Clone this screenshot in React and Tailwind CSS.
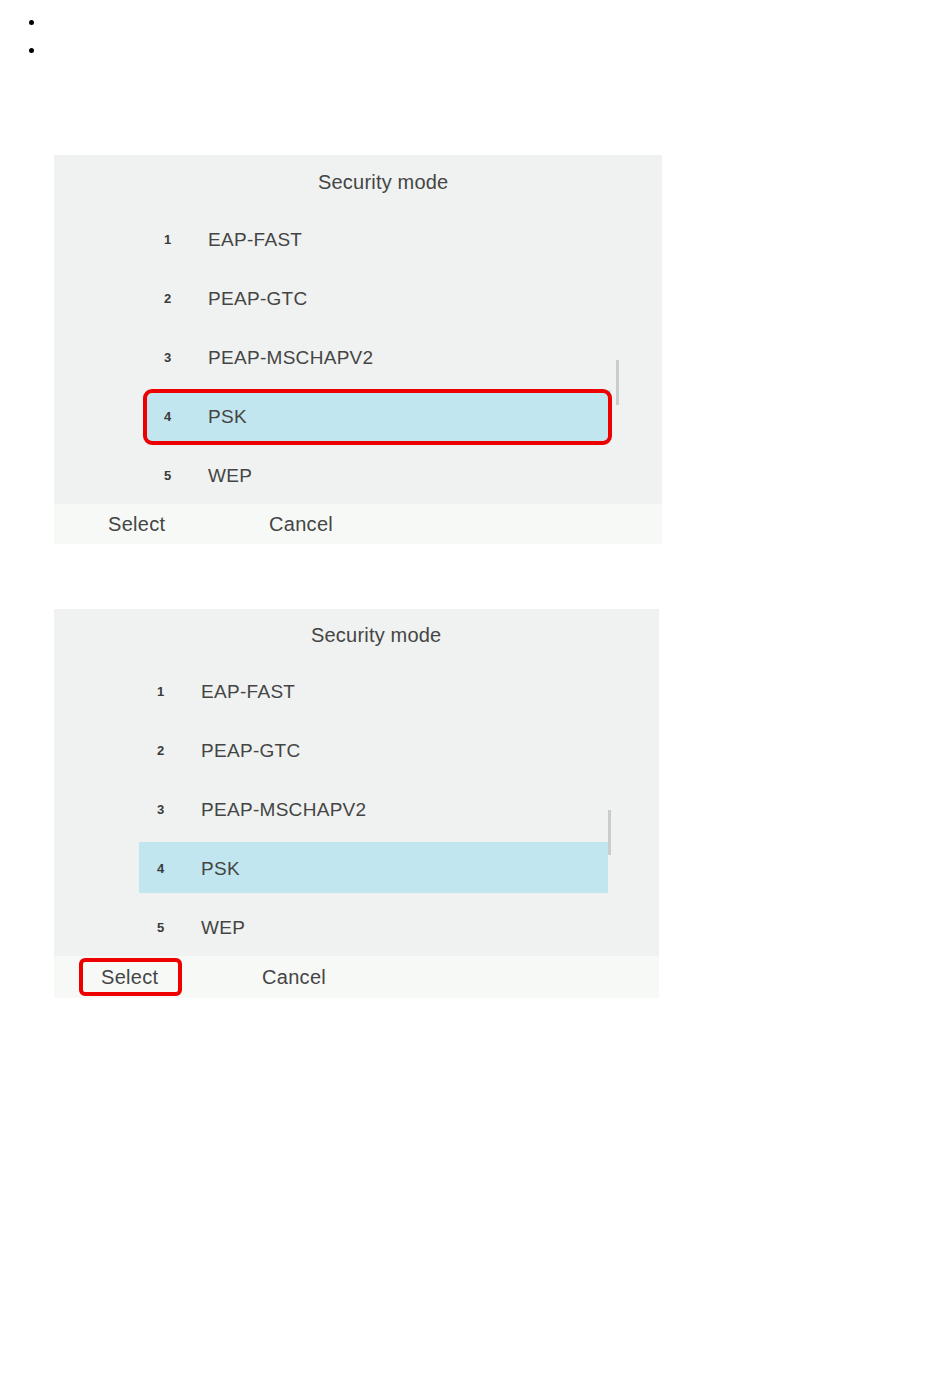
const items = ['EAP-FAST', 'PEAP-GTC', 'PEAP-MSCHAPV2', 'PSK', 'WEP'];

function Panel({ width, titleLeft, headerH, rowLeft, rowW, barLeft, barTop, softLeft, footerH, boxRow, boxSelect }) {
    return (
        <div className="relative bg-[#eff2f0] text-[#454545]" style={{ width }}>
            <div className="flex items-center text-[20px] tracking-[0.2px]" style={{ height: headerH, paddingLeft: titleLeft }}>
                Security mode
            </div>

            {/* list rows */}
            <div className="relative flex flex-col gap-[8px] py-[4px]">
                {items.map((label, i) => (
                    <div
                        key={label}
                        className={`h-[51px] flex items-center pt-[3px] ${i === 3 ? 'bg-[#c1e6ef]' : ''}`}
                        style={{ marginLeft: rowLeft, width: rowW }}
                    >
                        <span className="pl-[18px] w-[62px] text-[13px] font-semibold text-[#3a3a3a]">{i + 1}</span>
                        <span className="text-[19px] tracking-[0.3px]">{label}</span>
                    </div>
                ))}
                {/* scroll indicator */}
                <div className="absolute w-[3px] h-[45px] bg-[#cbcdcd]" style={{ left: barLeft, top: barTop }} />
            </div>

            {/* soft keys */}
            <div className="flex items-center bg-[#f6f9f6] text-[20px] tracking-[0.3px]" style={{ height: footerH, paddingLeft: softLeft }}>
                <span className="w-[161px]">Select</span>
                <span>Cancel</span>
            </div>

            {boxRow && (
                <div className="absolute left-[89px] top-[234px] w-[469px] h-[56px] border-[4px] border-[#ee0000] rounded-[9px]" />
            )}
            {boxSelect && (
                <div className="absolute left-[25px] top-[349px] w-[103px] h-[38px] border-[4px] border-[#ee0000] rounded-[6px]" />
            )}
        </div>
    );
}

export default function App() {
    return (
        <div className="min-h-[1398px] bg-white font-['Liberation_Sans',Arial,sans-serif]">
            <ul className="list-disc pl-[45px] pt-[8px] text-[16px] leading-[28px]">
                <li>&nbsp;</li>
                <li>&nbsp;</li>
            </ul>

            <div className="pl-[54px] pt-[91px] flex flex-col gap-[65px]">
                <Panel
                    width={608}
                    titleLeft={264}
                    headerH={54}
                    rowLeft={92}
                    rowW={465}
                    barLeft={562}
                    barTop={151}
                    softLeft={54}
                    footerH={40}
                    boxRow
                />
                <Panel
                    width={605}
                    titleLeft={257}
                    headerH={52}
                    rowLeft={85}
                    rowW={469}
                    barLeft={554}
                    barTop={149}
                    softLeft={47}
                    footerH={42}
                    boxSelect
                />
            </div>
        </div>
    );
}
